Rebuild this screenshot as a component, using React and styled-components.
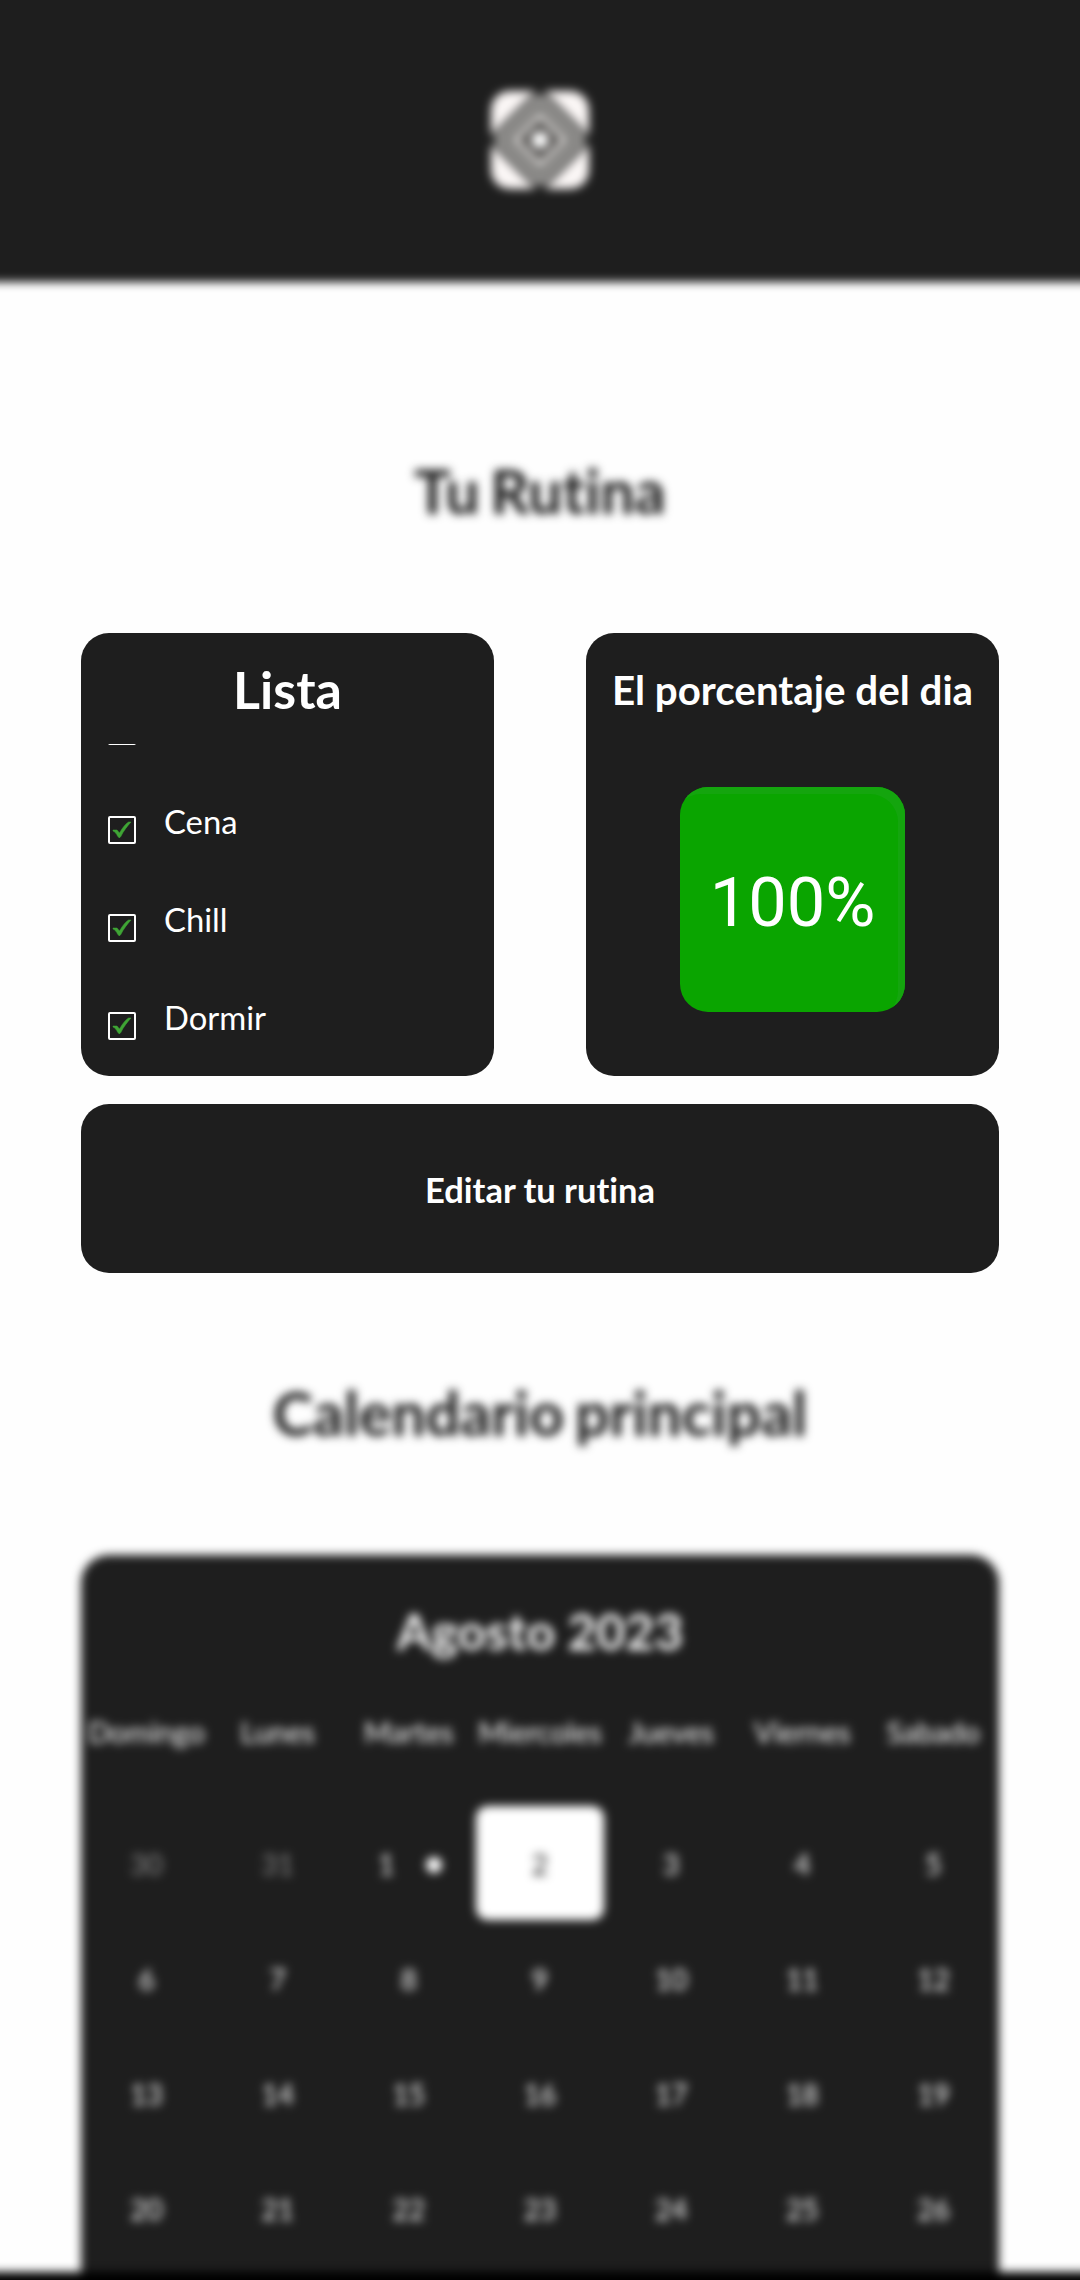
import React from 'react';
import styled, { createGlobalStyle, css } from 'styled-components';

const INK = '#1e1e1e';
const blurred = css`filter: blur(5px);`;

const GlobalStyle = createGlobalStyle`
  * { box-sizing: border-box; }
  html, body { margin: 0; background: #fefefe; overflow: hidden; }
  h1, h2, p, ul { margin: 0; padding: 0; }
`;

const Page = styled.div`
  width: 1080px;
  height: 2280px;
  overflow: hidden;
  display: flex;
  flex-direction: column;
  background: #fefefe;
  font-family: Lato, 'Open Sans', sans-serif;
  font-variant-ligatures: none;
  color: #fff;
`;

const Header = styled.header`
  flex: none;
  height: 322px;
  margin: -40px -40px 0;
  padding-top: 128px;
  display: flex;
  justify-content: center;
  background: ${INK};
  ${blurred}
`;

const Logo = styled.svg`
  width: 104px;
  height: 104px;
`;

const Heading = styled.h1`
  flex: none;
  height: ${p => p.$height}px;
  padding-top: ${p => p.$top}px;
  text-align: center;
  font-size: 60.8px;
  font-weight: 700;
  line-height: 72px;
  word-spacing: -4px;
  color: #141414;
  ${blurred}
`;

const Cards = styled.section`
  flex: none;
  display: flex;
  justify-content: space-between;
  padding: 0 81px;
`;

const Card = styled.article`
  width: 413px;
  height: 443px;
  display: flex;
  flex-direction: column;
  align-items: center;
  overflow: hidden;
  border-radius: 28px;
  background: ${INK};
`;

const CardTitle = styled.h2`
  flex: none;
  height: 111px;
  padding-top: ${p => p.$top}px;
  font-size: ${p => p.$size}px;
  font-weight: 700;
  line-height: 62px;
  white-space: nowrap;
`;

const List = styled.ul`
  flex: 1;
  width: 100%;
  min-height: 0;
  display: flex;
  flex-direction: column;
  justify-content: flex-end;
  overflow: hidden;
  padding: 0 27px;
  list-style: none;
`;

const Task = styled.li`
  flex: none;
  height: 98px;
  display: flex;
  align-items: flex-start;
  gap: 28px;
  padding-top: 34px;

  &:first-child {
    height: 99px;
  }
`;

const TaskName = styled.span`
  font-size: 32.8px;
  line-height: 40px;
  margin-top: -14px;
`;

const Box = styled.span`
  width: 28px;
  height: 28px;
  display: flex;
  border: 2px solid #fff;
  border-radius: 2px;
`;

const Score = styled.div`
  width: 225px;
  height: 225px;
  margin-top: 43px;
  padding-top: 5px;
  display: flex;
  align-items: center;
  justify-content: center;
  border-radius: 28px;
  background: #0aa500;
  box-shadow: inset -7px 7px 0 #14a50e;
  font-family: Roboto, sans-serif;
  font-size: 68.5px;
`;

const EditButton = styled.button`
  flex: none;
  height: 169px;
  margin: 28px 81px 0;
  padding: 3px 0 0;
  border: 0;
  border-radius: 28px;
  background: ${INK};
  color: #fff;
  font: 700 34.5px/40px Lato, sans-serif;
  font-variant-ligatures: none;
`;

const Calendar = styled.section`
  flex: 1;
  min-height: 0;
  margin: 0 81px -48px;
  display: flex;
  flex-direction: column;
  border-radius: 28px 28px 0 0;
  background: ${INK};
  ${blurred}
`;

const Month = styled.h2`
  flex: none;
  height: 153px;
  padding-top: 44px;
  text-align: center;
  font-size: 50px;
  font-weight: 700;
  line-height: 64px;
`;

const Week = styled.div`
  flex: none;
  display: grid;
  grid-template-columns: repeat(7, 1fr);
  height: ${p => p.$height}px;
`;

const DayName = styled.span`
  display: flex;
  justify-content: center;
  padding-top: 7px;
  font-size: 29px;
  line-height: 34px;
`;

const Day = styled.span`
  display: flex;
  align-items: center;
  justify-content: center;
  gap: 32px;
  margin: 0 2px 1px;
  padding-top: 2px;
  border-radius: 12px;
  font-size: 28px;
  color: ${p => (p.$today ? INK : p.$muted ? '#8c8c8c' : '#fff')};
  background: ${p => (p.$today ? '#fff' : 'transparent')};
`;

const Dot = styled.i`
  width: 16px;
  height: 16px;
  margin: 2px -3px 0 0;
  border-radius: 50%;
  background: #fff;
`;

const NavigationBar = styled.footer`
  flex: none;
  height: 48px;
  margin: 0 -40px -40px;
  background: #000;
  ${blurred}
`;

const weekdays = ['Domingo', 'Lunes', 'Martes', 'Miercoles', 'Jueves', 'Viernes', 'Sabado'];
const weeks = [
  [30, 31, 1, 2, 3, 4, 5],
  [6, 7, 8, 9, 10, 11, 12],
  [13, 14, 15, 16, 17, 18, 19],
  [20, 21, 22, 23, 24, 25, 26],
];

function Checkbox() {
  return (
    <Box>
      <svg width="24" height="24" viewBox="0 0 24 24">
        <path d="M3 12H7l2.500 3C12.500 9.500 15.500 6 18.500 4h2.500C17 8.500 13.500 13 10.800 18.500L9.300 20 7.500 18C6.500 15.500 5 14 3 13z" fill="#3fa535" stroke="#3fa535" strokeWidth="0.5" />
      </svg>
    </Box>
  );
}

export default function App() {
  return (
    <Page>
      <GlobalStyle />
      <Header>
        <Logo viewBox="0 0 104 104">
          <rect x="3" y="3" width="98" height="98" rx="19" fill="#fbf7f6" />
          <path d="M52-2 106 52 52 106-2 52z" fill={INK} />
          <path d="M52 0 104 52 52 104 0 52z" fill="#7b7a78" />
          <path d="M42-2H62L52 9zM42 106H62L52 95zM-2 42V62L9 52zM106 42V62L95 52z" fill={INK} />
          <path d="M52 8 96 52 52 96 8 52z" fill="#9d9c9a" />
          <path d="M52 15 89 52 52 89 15 52z" fill="#747371" />
          <path d="M52 23 81 52 52 81 23 52z" fill="#cfcdcb" />
          <path d="M52 31 73 52 52 73 31 52z" fill="#565452" />
          <circle cx="52" cy="52" r="8.500" fill="#fff" />
        </Logo>
      </Header>
      <Heading $height={351} $top={173}>Tu Rutina</Heading>
      <Cards>
        <Card>
          <CardTitle $top={25} $size={52}>Lista</CardTitle>
          <List>
            {['', 'Cena', 'Chill', 'Dormir'].map((name, i) => (
              <Task key={i}>
                <Checkbox />
                <TaskName>{name}</TaskName>
              </Task>
            ))}
          </List>
        </Card>
        <Card>
          <CardTitle $top={26} $size={40.3}>El porcentaje del dia</CardTitle>
          <Score>100%</Score>
        </Card>
      </Cards>
      <EditButton>Editar tu rutina</EditButton>
      <Heading $height={282} $top={104}>Calendario principal</Heading>
      <Calendar>
        <Month>Agosto 2023</Month>
        <Week $height={98}>
          {weekdays.map(name => <DayName key={name}>{name}</DayName>)}
        </Week>
        {weeks.map((days, row) => (
          <Week key={row} $height={115}>
            {days.map(day => (
              <Day key={day} $today={day === 2} $muted={row === 0 && day > 20}>
                {day}
                {day === 1 && <Dot />}
              </Day>
            ))}
          </Week>
        ))}
      </Calendar>
      <NavigationBar />
    </Page>
  );
}
